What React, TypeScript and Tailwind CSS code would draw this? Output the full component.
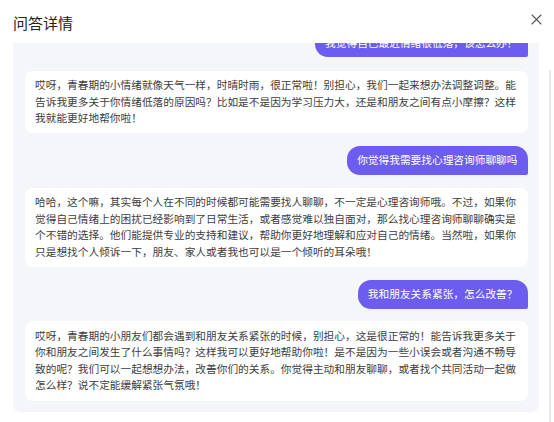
import React from "react";

const font = { fontFamily: '"Noto Sans CJK SC", "Noto Sans", sans-serif' };

function UserBubble({ children }: { children: React.ReactNode }) {
  return (
    <div className="flex justify-end">
      <div className="bg-[#6c5df0] text-white text-[10.7px] leading-[16.6px] py-[6.2px] px-[10px] rounded-tl-[13px] rounded-tr-[13px] rounded-bl-[13px] rounded-br-[2px] whitespace-nowrap">
        {children}
      </div>
    </div>
  );
}

function BotBubble({ lines }: { lines: string[] }) {
  return (
    <div className="bg-white rounded-[8px] pl-[10px] pr-[8px] py-[6.5px] text-[#3d3d3d] text-[10.7px] leading-[16.6px]">
      {lines.map((l, i) => (
        <div key={i} className="whitespace-nowrap">
          {l}
        </div>
      ))}
    </div>
  );
}

export default function App() {
  return (
    <div className="w-[554px] h-[422px] bg-white overflow-hidden flex flex-col" style={font}>
      <div className="h-[43px] shrink-0 flex items-start justify-between">
        <div className="ml-[13px] mt-[12px] text-[15px] leading-[22px] font-normal text-[#222222]">问答详情</div>
        <svg className="mt-[13.5px] mr-[12px]" width="11" height="11" viewBox="0 0 11 11">
          <path d="M1 1 L10 10 M10 1 L1 10" stroke="#555" strokeWidth="1.1" strokeLinecap="round" />
        </svg>
      </div>
      <div className="flex flex-1 min-h-0">
        <div className="ml-[13px] w-[525.5px] h-[368.7px] bg-[#f5f6fa] rounded-b-[8px] overflow-hidden flex flex-col gap-[12.6px] pl-[12px] pr-[11px]">
          <div className="-mt-[14.7px] mb-[0.8px]">
            <UserBubble>我觉得自己最近情绪很低落，该怎么办？</UserBubble>
          </div>
          <BotBubble
            lines={[
              "哎呀，青春期的小情绪就像天气一样，时晴时雨，很正常啦！别担心，我们一起来想办法调整调整。能",
              "告诉我更多关于你情绪低落的原因吗？比如是不是因为学习压力大，还是和朋友之间有点小摩擦？这样",
              "我就能更好地帮你啦！",
            ]}
          />
          <UserBubble>你觉得我需要找心理咨询师聊聊吗</UserBubble>
          <BotBubble
            lines={[
              "哈哈，这个嘛，其实每个人在不同的时候都可能需要找人聊聊，不一定是心理咨询师哦。不过，如果你",
              "觉得自己情绪上的困扰已经影响到了日常生活，或者感觉难以独自面对，那么找心理咨询师聊聊确实是",
              "个不错的选择。他们能提供专业的支持和建议，帮助你更好地理解和应对自己的情绪。当然啦，如果你",
              "只是想找个人倾诉一下，朋友、家人或者我也可以是一个倾听的耳朵哦！",
            ]}
          />
          <UserBubble>我和朋友关系紧张，怎么改善？</UserBubble>
          <BotBubble
            lines={[
              "哎呀，青春期的小朋友们都会遇到和朋友关系紧张的时候，别担心，这是很正常的！能告诉我更多关于",
              "你和朋友之间发生了什么事情吗？这样我可以更好地帮助你啦！是不是因为一些小误会或者沟通不畅导",
              "致的呢？我们可以一起想想办法，改善你们的关系。你觉得主动和朋友聊聊，或者找个共同活动一起做",
              "怎么样？说不定能缓解紧张气氛哦！",
            ]}
          />
        </div>
        <div className="ml-[10.5px] mt-[27px] w-[2px] self-stretch bg-[#e8e9ef]" />
      </div>
    </div>
  );
}
